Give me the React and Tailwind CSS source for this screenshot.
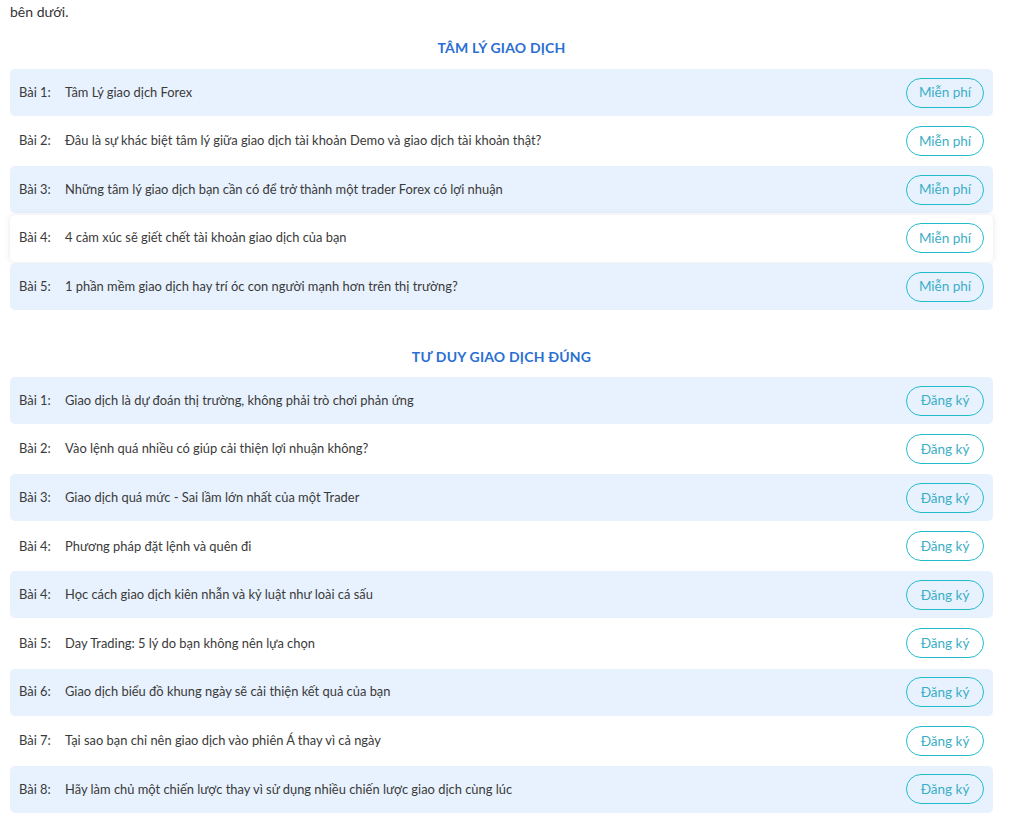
import React from "react";

const sec1 = [
  ["Bài 1:", "Tâm Lý giao dịch Forex"],
  ["Bài 2:", "Đâu là sự khác biệt tâm lý giữa giao dịch tài khoản Demo và giao dịch tài khoản thật?"],
  ["Bài 3:", "Những tâm lý giao dịch bạn cần có để trở thành một trader Forex có lợi nhuận"],
  ["Bài 4:", "4 cảm xúc sẽ giết chết tài khoản giao dịch của bạn"],
  ["Bài 5:", "1 phần mềm giao dịch hay trí óc con người mạnh hơn trên thị trường?"],
];
const sec2 = [
  ["Bài 1:", "Giao dịch là dự đoán thị trường, không phải trò chơi phản ứng"],
  ["Bài 2:", "Vào lệnh quá nhiều có giúp cải thiện lợi nhuận không?"],
  ["Bài 3:", "Giao dịch quá mức - Sai lầm lớn nhất của một Trader"],
  ["Bài 4:", "Phương pháp đặt lệnh và quên đi"],
  ["Bài 4:", "Học cách giao dịch kiên nhẫn và kỷ luật như loài cá sấu"],
  ["Bài 5:", "Day Trading: 5 lý do bạn không nên lựa chọn"],
  ["Bài 6:", "Giao dịch biểu đồ khung ngày sẽ cải thiện kết quả của bạn"],
  ["Bài 7:", "Tại sao bạn chỉ nên giao dịch vào phiên Á thay vì cả ngày"],
  ["Bài 8:", "Hãy làm chủ một chiến lược thay vì sử dụng nhiều chiến lược giao dịch cùng lúc"],
];

function Row({ n, t, i, btn, shadow }) {
  const blue = i % 2 === 0;
  return (
    <div
      className={
        "flex items-center h-[47px] rounded-[5px] pl-[9px] pr-[9px] " +
        (blue ? "bg-[#e8f2fe]" : "bg-white") +
        (shadow ? " shadow-[0_0_6px_rgba(0,0,0,0.10)]" : "")
      }
    >
      <span className="w-[46px] shrink-0 text-[12.9px] text-[#3a3a3a]">{n}</span>
      <span className="flex-1 text-[12.9px] text-[#3a3a3a]">{t}</span>
      <span className="flex items-center justify-center w-[78px] h-[30px] rounded-full border border-[#22bccd] text-[13.5px] text-[#3aaec6]">
        {btn}
      </span>
    </div>
  );
}

export default function App() {
  return (
    <div className="bg-white w-[1015px] min-h-[821px] px-[10px] font-['Lato','Noto_Sans',sans-serif] overflow-hidden">
      <p className="text-[14px] leading-[18px] pt-[3px] text-[#333]">bên dưới.</p>
      <h2 className="w-[983px] text-center text-[14px] font-bold text-[#2b6fd3] tracking-[0.2px] mt-[17px] mb-[11px] leading-[20px]">
        TÂM LÝ GIAO DỊCH
      </h2>
      <div className="w-[983px] flex flex-col gap-[1.5px]">
        {sec1.map(([n, t], i) => (
          <Row key={i} n={n} t={t} i={i} btn="Miễn phí" shadow={i === 3} />
        ))}
      </div>
      <h2 className="w-[983px] text-center text-[14px] font-bold text-[#2b6fd3] tracking-[0.2px] mt-[37px] mb-[10px] leading-[20px]">
        TƯ DUY GIAO DỊCH ĐÚNG
      </h2>
      <div className="w-[983px] flex flex-col gap-[1.6px]">
        {sec2.map(([n, t], i) => (
          <Row key={i} n={n} t={t} i={i} btn="Đăng ký" />
        ))}
      </div>
    </div>
  );
}
